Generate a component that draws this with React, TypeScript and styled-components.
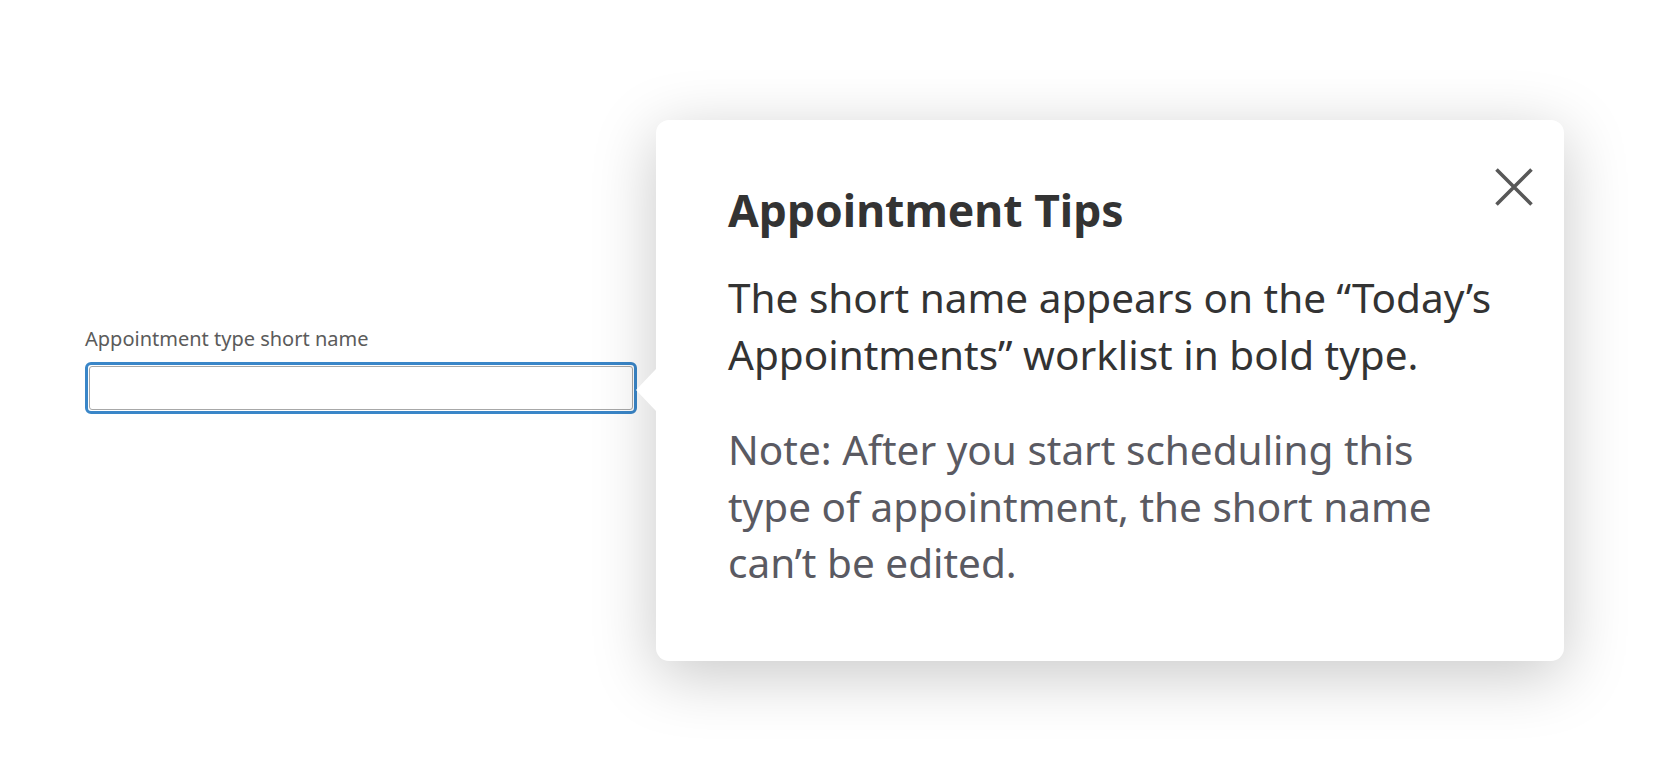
import React from "react";
import styled, { createGlobalStyle } from "styled-components";

const GlobalStyle = createGlobalStyle`
  html, body { margin: 0; padding: 0; background: #ffffff; }
  body { font-family: "Noto Sans", Lato, sans-serif; }
`;

const Page = styled.div`
  display: flex;
  align-items: flex-start;
  gap: 19px;
  padding: 120px 0 0 85px;
  width: 1660px;
  height: 776px;
  box-sizing: border-box;
`;

const Field = styled.div`
  display: flex;
  flex-direction: column;
  gap: 11px;
  width: 552px;
  margin-top: 206px;
`;

const Label = styled.label`
  font-family: "Noto Sans", Lato, sans-serif;
  font-size: 20px;
  line-height: 25px;
  color: #5b5b5b;
`;

const FocusRing = styled.div`
  border: 3px solid #3a86c8;
  border-radius: 6px;
  padding: 1px;
  background: #fff;
`;

const Input = styled.input`
  display: block;
  width: 100%;
  height: 44px;
  box-sizing: border-box;
  border: 1px solid #a8a8a8;
  border-radius: 3px;
  outline: none;
  font-size: 18px;
`;

const Card = styled.div`
  position: relative;
  width: 908px;
  box-sizing: border-box;
  padding: 62px 60px 69px 72px;
  background: #fff;
  border-radius: 13px;
  box-shadow: 0 14px 64px rgba(0, 0, 0, 0.22);

  &::before {
    content: "";
    position: absolute;
    left: -20px;
    top: 249px;
    border-style: solid;
    border-width: 21px 20px 21px 0;
    border-color: transparent #fff transparent transparent;
  }
`;

const Title = styled.h2`
  margin: 0;
  font-family: "Noto Sans", Lato, sans-serif;
  font-weight: 700;
  font-size: 44.5px;
  line-height: 56px;
  color: #333333;
`;

const Text = styled.p<{ $muted?: boolean; $gap: number }>`
  margin: ${(p) => p.$gap}px 0 0;
  font-family: "Noto Sans", Lato, sans-serif;
  font-size: 40.5px;
  line-height: 56.5px;
  color: ${(p) => (p.$muted ? "#5a5a62" : "#333333")};
`;

const CloseButton = styled.button`
  position: absolute;
  top: 48px;
  right: 31px;
  width: 38px;
  height: 38px;
  padding: 0;
  border: none;
  background: transparent;
  cursor: pointer;
  display: flex;
`;

export default function App() {
  return (
    <>
      <GlobalStyle />
      <Page>
        <Field>
          <Label htmlFor="short-name">Appointment type short name</Label>
          <FocusRing>
            <Input id="short-name" type="text" />
          </FocusRing>
        </Field>
        <Card>
          <CloseButton aria-label="Close">
            <svg width="38" height="38" viewBox="0 0 38 38">
              <path d="M1.5 1.5 L36.5 36.5 M36.5 1.5 L1.5 36.5" stroke="#585858" strokeWidth="3.6" fill="none" />
            </svg>
          </CloseButton>
          <Title>Appointment Tips</Title>
          <Text $gap={32}>
            The short name appears on the “Today’s
            <br />
            Appointments” worklist in bold type.
          </Text>
          <Text $gap={39} $muted>
            Note: After you start scheduling this
            <br />
            type of appointment, the short name
            <br />
            can’t be edited.
          </Text>
        </Card>
      </Page>
    </>
  );
}
